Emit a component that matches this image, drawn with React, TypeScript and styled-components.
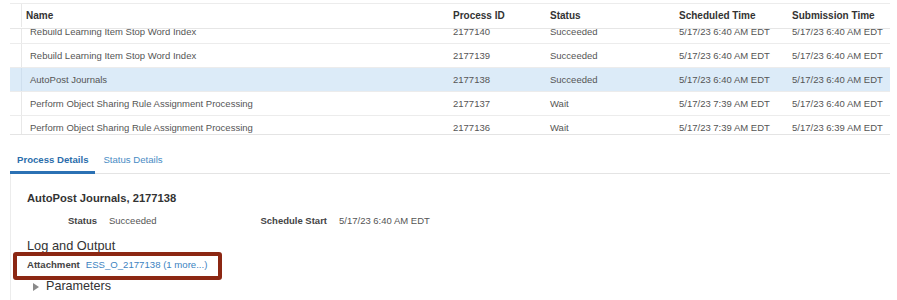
import React from "react";
import styled, { createGlobalStyle, css } from "styled-components";

const Global = createGlobalStyle`
  html, body { margin: 0; padding: 0; background: #fff; }
  body { font-family: "Liberation Sans", Arial, sans-serif; color: #555; }
`;

const cols = "12px 427px 97px 129px 113px 99px";

const Page = styled.div`
  width: 897px;
  height: 300px;
  overflow: hidden;
  padding-top: 3px;
  box-sizing: border-box;
`;

const Table = styled.div`
  margin-left: 10px;
  width: 880px;
  border-top: 1px solid #ececec;
  border-bottom: 1px solid #e4e4e4;
`;

const HeaderRow = styled.div`
  display: grid;
  grid-template-columns: ${cols};
  height: 25px;
  padding-bottom: 1px;
  align-items: stretch;
  border-bottom: 1px solid #e6e6e6;
  box-sizing: border-box;
`;

const Cell = styled.div<{ $head?: boolean; $name?: boolean }>`
  display: flex;
  align-items: center;
  padding-left: ${(p) => (p.$name && !p.$head ? 8 : 4)}px;
  white-space: nowrap;
  overflow: hidden;
  ${(p) =>
    p.$head
      ? css`
          font-size: 10px;
          font-weight: bold;
          color: #333;
        `
      : css`
          font-size: 9.5px;
          color: #555;
        `}
`;

const Selector = styled.div`
  border-right: 1px solid #e8e8e8;
`;

const BodyViewport = styled.div`
  height: 105px;
  overflow: hidden;
`;

const BodyInner = styled.div`
  margin-top: -9px;
`;

const Row = styled.div<{ $selected?: boolean }>`
  display: grid;
  grid-template-columns: ${cols};
  height: 24px;
  box-sizing: border-box;
  border-bottom: 1px solid #ececec;
  background: ${(p) => (p.$selected ? "#dcebf8" : "#fff")};
  ${Selector} {
    border-right-color: ${(p) => (p.$selected ? "#cfdfee" : "#e8e8e8")};
  }
`;

const Tabs = styled.div`
  display: flex;
  margin: 10px 7px 0 10px;
  border-bottom: 1px solid #e4e4e4;
  height: 29px;
  box-sizing: border-box;
`;

const Tab = styled.div<{ $active?: boolean }>`
  display: flex;
  align-items: center;
  padding: 0 7px 1px 7px;
  font-size: 9.6px;
  margin-bottom: -1px;
  ${(p) =>
    p.$active
      ? css`
          font-weight: bold;
          color: #2a6dab;
          border-bottom: 3px solid #2b71b4;
          padding-top: 3px;
        `
      : css`
          color: #4a8cc4;
          padding-left: 8px;
        `}
`;

const Panel = styled.div`
  margin-left: 10px;
  border-left: 1px solid #ececec;
  padding: 17px 0 0 16px;
  display: flex;
  flex-direction: column;
  height: 140px;
  box-sizing: border-box;
`;

const Title = styled.div`
  font-size: 11.2px;
  font-weight: bold;
  color: #333;
  line-height: 14px;
`;

const Fields = styled.div`
  display: grid;
  grid-template-columns: 70px 136px 70px auto;
  column-gap: 12px;
  margin-top: 10px;
  line-height: 12px;
  font-size: 9.5px;
`;

const Label = styled.div`
  text-align: right;
  font-weight: bold;
  color: #444;
  white-space: nowrap;
`;

const Value = styled.div`
  color: #555;
  white-space: nowrap;
`;

const Section = styled.div`
  margin-top: 11px;
  font-size: 12.8px;
  line-height: 16px;
  color: #333;
`;

const Highlight = styled.div`
  align-self: flex-start;
  border: 4px solid #8c2713;
  border-radius: 3px;
  padding: 3px 11px 5px 10px;
  margin: -2px 0 -9px -14px;
  display: flex;
  gap: 6px;
  font-size: 9.6px;
  line-height: 12px;
  white-space: nowrap;
`;

const Link = styled.span`
  color: #3c83bf;
`;

const Disclosure = styled.div`
  margin-top: 8px;
  margin-left: 6px;
  display: flex;
  align-items: center;
  gap: 7px;
  font-size: 12.6px;
  line-height: 15px;
  color: #333;
`;

const Triangle = styled.span`
  width: 0;
  height: 0;
  border-left: 6px solid #8a8a8a;
  border-top: 4.5px solid transparent;
  border-bottom: 4.5px solid transparent;
`;

const rows = [
  ["Rebuild Learning Item Stop Word Index", "2177140", "Succeeded", "5/17/23 6:40 AM EDT", "5/17/23 6:40 AM EDT"],
  ["Rebuild Learning Item Stop Word Index", "2177139", "Succeeded", "5/17/23 6:40 AM EDT", "5/17/23 6:40 AM EDT"],
  ["AutoPost Journals", "2177138", "Succeeded", "5/17/23 6:40 AM EDT", "5/17/23 6:40 AM EDT"],
  ["Perform Object Sharing Rule Assignment Processing", "2177137", "Wait", "5/17/23 7:39 AM EDT", "5/17/23 6:40 AM EDT"],
  ["Perform Object Sharing Rule Assignment Processing", "2177136", "Wait", "5/17/23 7:39 AM EDT", "5/17/23 6:39 AM EDT"],
];

export default function App() {
  return (
    <Page>
      <Global />
      <Table>
        <HeaderRow>
          <Selector />
          <Cell $head $name>Name</Cell>
          <Cell $head>Process ID</Cell>
          <Cell $head>Status</Cell>
          <Cell $head>Scheduled Time</Cell>
          <Cell $head>Submission Time</Cell>
        </HeaderRow>
        <BodyViewport>
          <BodyInner>
            {rows.map((r, i) => (
              <Row key={i} $selected={r[1] === "2177138"}>
                <Selector />
                <Cell $name>{r[0]}</Cell>
                <Cell>{r[1]}</Cell>
                <Cell>{r[2]}</Cell>
                <Cell>{r[3]}</Cell>
                <Cell>{r[4]}</Cell>
              </Row>
            ))}
          </BodyInner>
        </BodyViewport>
      </Table>
      <Tabs>
        <Tab $active>Process Details</Tab>
        <Tab>Status Details</Tab>
      </Tabs>
      <Panel>
        <Title>AutoPost Journals, 2177138</Title>
        <Fields>
          <Label>Status</Label>
          <Value>Succeeded</Value>
          <Label>Schedule Start</Label>
          <Value>5/17/23 6:40 AM EDT</Value>
        </Fields>
        <Section>Log and Output</Section>
        <Highlight>
          <Label>Attachment</Label>
          <Link>ESS_O_2177138 (1 more...)</Link>
        </Highlight>
        <Disclosure>
          <Triangle />
          Parameters
        </Disclosure>
      </Panel>
    </Page>
  );
}
